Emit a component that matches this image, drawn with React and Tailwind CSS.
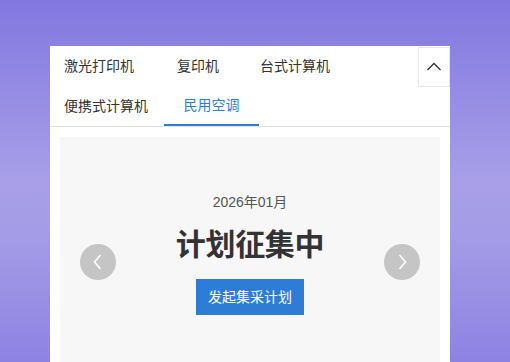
export default function App() {
  const font = { fontFamily: '"Helvetica Neue", "Liberation Sans", "Noto Sans CJK SC", sans-serif' };
  return (
    <div
      className="w-[510px] h-[362px] overflow-hidden bg-[linear-gradient(to_bottom,#8177e0_0%,#a89fe8_50%,#a59ce7_65%,#8d82e2_100%)] pt-[46px] px-[50px]"
      style={font}
    >
      <div className="w-[400px] h-[400px] bg-white">
        <div className="flex h-[40px] items-center text-[14px] text-[#333]">
          <span className="ml-[14px] w-[70px] whitespace-nowrap">激光打印机</span>
          <span className="ml-[43px] w-[42px] whitespace-nowrap">复印机</span>
          <span className="ml-[41px] w-[70px] whitespace-nowrap">台式计算机</span>
          <div className="ml-auto w-[32px] h-[40px] mt-[1px] border border-[#e6e6e6] flex items-center justify-center">
            <svg width="16" height="10" viewBox="0 0 16 10">
              <polyline points="1.5,8 8,1.5 14.5,8" fill="none" stroke="#333" strokeWidth="1.3" />
            </svg>
          </div>
        </div>
        <div className="flex h-[41px] border-b border-[#e3e3e3] text-[14px]">
          <span className="ml-[14px] w-[84px] h-[40px] flex items-center whitespace-nowrap text-[#333]">便携式计算机</span>
          <span className="ml-[16px] w-[95px] h-[40px] flex items-center justify-center border-b-2 border-[#2d7dd6] text-[#2d7dd6] whitespace-nowrap">民用空调</span>
        </div>
        <div className="relative mx-[10px] mt-[10px] h-[260px] bg-[#f7f7f7] flex flex-col items-center pt-[55px]">
          <div className="text-[14px] leading-[20px] text-[#555]">2026年01月</div>
          <div className="mt-[13px] text-[30px] leading-[40px] font-bold text-[#333] tracking-[-0.3px]">计划征集中</div>
          <button className="mt-[14px] w-[108px] h-[36px] bg-[#2d7dd6] text-white text-[14px] flex items-center justify-center">发起集采计划</button>
          <div className="absolute left-[20px] top-[107px] w-[36px] h-[36px] rounded-full bg-[#c5c5c5] flex items-center justify-center">
            <svg width="12" height="18" viewBox="0 0 12 18">
              <polyline points="8.5,2 2.5,9 8.5,16" fill="none" stroke="#fff" strokeWidth="1.6" />
            </svg>
          </div>
          <div className="absolute right-[20px] top-[107px] w-[36px] h-[36px] rounded-full bg-[#c5c5c5] flex items-center justify-center">
            <svg width="12" height="18" viewBox="0 0 12 18">
              <polyline points="3.5,2 9.5,9 3.5,16" fill="none" stroke="#fff" strokeWidth="1.6" />
            </svg>
          </div>
        </div>
      </div>
    </div>
  );
}
